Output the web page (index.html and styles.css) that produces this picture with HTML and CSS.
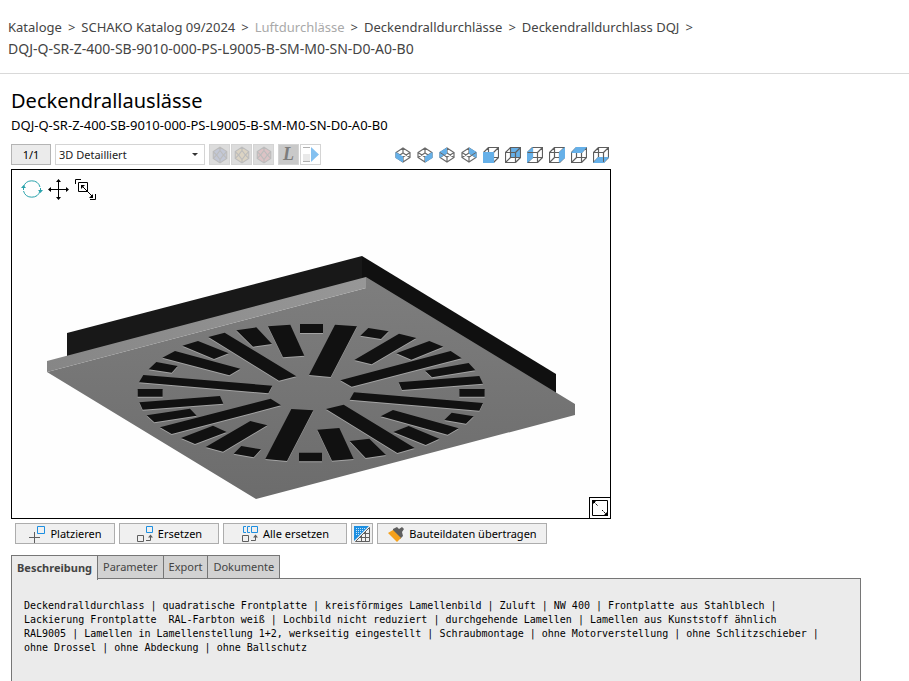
FILE: index.html
```html
<!DOCTYPE html>
<html lang="de">
<head>
<meta charset="utf-8">
<meta name="viewport" content="width=device-width, initial-scale=1">
<title>Deckendrallauslässe</title>
<link rel="stylesheet" href="styles.css">
</head>
<body>
<nav class="crumbs" aria-label="Pfad">
<a href="#">Kataloge</a><span class="sep">&gt;</span><a href="#">SCHAKO Katalog 09/2024</a><span class="sep">&gt;</span><a href="#" class="muted">Luftdurchlässe</a><span class="sep">&gt;</span><a href="#">Deckendralldurchlässe</a><span class="sep">&gt;</span><a href="#">Deckendralldurchlass DQJ</a><span class="sep">&gt;</span><br><a href="#" class="code">DQJ-Q-SR-Z-400-SB-9010-000-PS-L9005-B-SM-M0-SN-D0-A0-B0</a>
</nav>
<main class="page">
<h1 class="title">Deckendrallauslässe</h1>
<p class="subtitle">DQJ-Q-SR-Z-400-SB-9010-000-PS-L9005-B-SM-M0-SN-D0-A0-B0</p>

<svg class="defs" aria-hidden="true">
<defs>
<symbol id="gem" viewBox="0 0 16 16"><path d="M8 1l6 4v6l-6 4-6-4V5z" fill="currentColor"/><path d="M8 1l6 4v6l-6 4-6-4V5zM8 4l3 4-3 4-3-4zM2 5l3 3-3 3M14 5l-3 3 3 3M8 1v3M8 12v3" fill="none" stroke="#bcbcbc"/></symbol>
<symbol id="iso" viewBox="0 0 16 16"><path d="M8 1l7 4.500v5L8 15l-7-4.500v-5zM1 5.500l7 4.500 7-4.500M8 10v5M8 1v5M1 10.500L8 6l7 4.500" fill="none" stroke="#6a6a6a" stroke-width="1.200"/></symbol>
<symbol id="cube" viewBox="0 0 16 16"><path d="M.5 5.500h10v10h-10zM5.500 .5h10v10h-10zM.5 5.500l5-5M10.500 5.500l5-5M10.500 15.500l5-5M.5 15.500l5-5" fill="none" stroke="#5e5e5e" stroke-width="1.200"/></symbol>
</defs>
</svg>

<div class="bar">
<span class="count">1/1</span>
<span class="picker"><select aria-label="Ansicht"><option>3D Detailliert</option></select></span>
<div class="modes">
<button class="mode blue" aria-label="Blau" disabled><svg><use href="#gem"/></svg></button>
<button class="mode sand" aria-label="Gelb" disabled><svg><use href="#gem"/></svg></button>
<button class="mode red" aria-label="Rot" disabled><svg><use href="#gem"/></svg></button>
</div>
<div class="modes">
<button class="mode ell">L</button>
<button class="mode play" aria-label="Weiter"><svg viewBox="0 0 19 19"><path d="M2 2.500h7M2 16.500h7" stroke="#b0b0b0"/><path d="M2 9h7v7H2z" fill="#e9e9e9"/><path d="M10 2l8 7.500-8 7.500z" fill="#83c0f0"/></svg></button>
</div>
<div class="views">
<button aria-label="Isometrie 1"><svg viewBox="0 0 16 16"><use href="#iso"/><path d="M.5 5L8 9.500V15.500L.5 11z" fill="#66b0e8"/></svg></button>
<button aria-label="Isometrie 2"><svg viewBox="0 0 16 16"><use href="#iso"/><path d="M15.500 5L8 9.500v6l7.500-4.500z" fill="#66b0e8"/></svg></button>
<button aria-label="Isometrie 3"><svg viewBox="0 0 16 16"><use href="#iso"/><path d="M.5 5L8 .5v6L.5 11z" fill="#66b0e8"/><path d="M1 5.500l7 4.500" stroke="#6a6a6a"/></svg></button>
<button aria-label="Isometrie 4"><svg viewBox="0 0 16 16"><use href="#iso"/><path d="M15.500 5L8 .5v6l7.500 4.500z" fill="#66b0e8"/><path d="M15 5.500L8 10" stroke="#6a6a6a"/></svg></button>
<button aria-label="Vorne"><svg viewBox="0 0 16 16"><use href="#cube"/><path d="M0 5h11v11H0z" fill="#66b0e8"/></svg></button>
<button aria-label="Hinten"><svg viewBox="0 0 16 16"><path d="M5 0h11v11H5z" fill="#66b0e8"/><use href="#cube"/></svg></button>
<button aria-label="Links"><svg viewBox="0 0 16 16"><use href="#cube"/><path d="M0 5l6-5v11l-6 5z" fill="#66b0e8"/><path d="M.5 5.500h10" stroke="#5e5e5e"/></svg></button>
<button aria-label="Rechts"><svg viewBox="0 0 16 16"><use href="#cube"/><path d="M10 5l6-5v11l-6 5z" fill="#66b0e8"/></svg></button>
<button aria-label="Oben"><svg viewBox="0 0 16 16"><use href="#cube"/><path d="M0 6l5-6h11l-5 6z" fill="#66b0e8"/></svg></button>
<button aria-label="Unten"><svg viewBox="0 0 16 16"><use href="#cube"/><path d="M0 16l5-6h11l-5 6z" fill="#66b0e8"/><path d="M10.500 6v9" stroke="#5e5e5e"/></svg></button>
</div>
</div>

<div class="viewer">
<svg class="model" viewBox="0 0 598 348" role="img" aria-label="Deckendralldurchlass">
<defs>
<linearGradient id="plate" x1="0" y1="0" x2="0" y2="1"><stop offset="0" stop-color="#7e7e7e"/><stop offset="1" stop-color="#6c6c6c"/></linearGradient>
<linearGradient id="rim"><stop offset="0" stop-color="#868686"/><stop offset="1" stop-color="#979797"/></linearGradient>
<g id="slots">
<path d="M265 81L314 68 529 199 477 212zM349 61L409 52 456 102 399 110zM444 49L511 44 553 137 489 142zM187 107L234 93 326 130 282 147zM127 143L165 123 361 176 328 196zM86 178L109 156 173 168 155 188zM57 217L70 195 457 227 445 250zM53 237H128V260H53zM58 277L300 258 310 281 68 299zM80 316L210 296 230 317 103 337zM120 352L452 266 483 286 155 372zM183 384L279 347 320 366 225 402zM257 411L391 333 442 346 309 425zM341 431L364 408 423 418 401 442zM514 297L580 301 501 453 436 447zM540 42H609V69H540zM537 428H606V454H537z"/>
<path transform="translate(540 0)" d="M105 44L171 49 92 201 27 195zM181 77L205 54 266 64 243 87zM163 150L297 71 349 84 215 163zM289 130L388 93 430 110 334 149zM121 211L452 123 485 145 155 230zM375 182L506 159 526 181 396 202zM296 217L538 198 549 221 306 240zM478 237H554V260H478zM162 247L549 279 538 302 149 269zM433 330L455 308 521 319 498 341zM242 319L279 300 476 355 443 374zM280 366L326 348 418 386 377 405zM78 297L131 284 344 414 292 429zM149 393L208 386 258 435 197 444zM52 359L118 354 161 447 96 452z"/>
</g>
</defs>
<path d="M55 163L350 86v30L55 190z" fill="#181818"/>
<path d="M350 86l194 118v20L350 112z" fill="#101010"/>
<path d="M35 202l319-84v-11l209 127v11l-319 84z" fill="url(#plate)"/>
<path d="M35 191l319-84v11L35 202z" fill="url(#rim)"/>
<g transform="translate(108 140) scale(.33333)">
<use href="#slots" y="3" fill="#a4a4a4"/>
<use href="#slots" fill="#111"/>
</g>
</svg>
<div class="tools">
<button aria-label="Drehen"><svg viewBox="0 0 22 22" fill="none" stroke="#2ba3ac"><path d="M2.500 9a8.600 8.600 0 0 1 16.500 0M19 13a8.600 8.600 0 0 1-16.500 0M2.500 9v3M19.500 10v3"/><path d="M0 10h5l-2.500-3zM17 12h5l-2.500 3z" fill="#2ba3ac" stroke="none"/></svg></button>
<button aria-label="Verschieben"><svg viewBox="0 0 22 22"><path d="M10.500 2v18M2 11.500h18" stroke="#000"/><path d="M10.500 1l2.500 3h-5zM10.500 22l2.500-3h-5zM0 11.500L3 9v5zM21 11.500L18 9v5z"/></svg></button>
<button aria-label="Zoomen"><svg viewBox="0 0 22 22" fill="none" stroke="#000"><path d="M.5 6V1.500H6M3.500 4.500h9v9h-9zM7 8l11 11M20.500 16v5.500H15"/><path d="M6 7h4l-4 4zM18 20h-4l4-4z" fill="#000" stroke="none"/></svg></button>
</div>
<button class="expand" aria-label="Vollbild"><svg viewBox="0 0 20 20"><path d="M2.500 2.500h15v15h-15z" fill="none" stroke="#000"/><path d="M4 4l4 4M12 12l4 4" stroke="#000" stroke-dasharray="2 1"/><path d="M2 2h5L2 7zM18 18h-5l5-5z"/></svg></button>
</div>

<div class="actions">
<button class="act"><svg viewBox="0 0 18 18" fill="none"><path d="M6.500 7v11M1 12.500h11" stroke="#5e5e5e"/><path d="M9.500 1.500h7v7h-7z" stroke="#1d8fe1" fill="#f0f0f0"/></svg>Platzieren</button>
<button class="act"><svg viewBox="0 0 18 18" fill="none"><path d="M1.500 10.500h6v6h-6zM10 15.500h4.500V12" stroke="#5e5e5e"/><path d="M12 12.500l2.500-3 2.500 3z" fill="#5e5e5e"/><path d="M10.500 1.500h6v6h-6z" stroke="#1d8fe1"/></svg>Ersetzen</button>
<button class="act wide"><svg viewBox="0 0 18 18" fill="none"><path d="M1.500 10.500h6v6h-6zM10 15.500h4.500V12" stroke="#5e5e5e"/><path d="M12 12.500l2.500-3 2.500 3z" fill="#5e5e5e"/><path d="M10.500 1.500h6v6h-6zM5 1.500H2.500v6H5M9 1.500H6.500v6H9" stroke="#1d8fe1"/></svg>Alle ersetzen</button>
<button class="act square" aria-label="Raster"><svg viewBox="0 0 18 18"><path d="M1 1h15L1 16z" fill="#1d8fe1"/><path d="M3 3.500h9M3 5.500h7M3 7.500h5M3 9.500h3" stroke="#c5e3fa" stroke-dasharray="1 1"/><path d="M16.500 2.500v14H2.500zM12.500 6v10M8.500 10v6M6 12.500h10M10 8.500h6" fill="none" stroke="#5e5e5e"/></svg></button>
<button class="act widest"><svg viewBox="0 0 18 18"><path d="M6 4l4-2 2 2 3-2 2 2-2 3 1 4-3 3-7-7z" fill="#5e5e5e"/><path d="M1 8l5-3 8 8-4 4z" fill="#f6a11b"/></svg>Bauteildaten übertragen</button>
</div>

<div class="tabs" role="tablist">
<button class="tab active" role="tab" aria-selected="true">Beschreibung</button>
<button class="tab" role="tab">Parameter</button>
<button class="tab" role="tab">Export</button>
<button class="tab" role="tab">Dokumente</button>
</div>
<section class="panel">
<pre class="text">Deckendralldurchlass | quadratische Frontplatte | kreisförmiges Lamellenbild | Zuluft | NW 400 | Frontplatte aus Stahlblech |
Lackierung Frontplatte  RAL-Farbton weiß | Lochbild nicht reduziert | durchgehende Lamellen | Lamellen aus Kunststoff ähnlich
RAL9005 | Lamellen in Lamellenstellung 1+2, werkseitig eingestellt | Schraubmontage | ohne Motorverstellung | ohne Schlitzschieber |
ohne Drossel | ohne Abdeckung | ohne Ballschutz</pre>
</section>
</main>
</body>
</html>
```
FILE: styles.css
```css
* { box-sizing: border-box; }
body {
  margin: 0;
  min-height: 100vh;
  display: flex;
  flex-direction: column;
  background: #fff;
  color: #000;
  font: 12px/20px "Noto Sans", sans-serif;
}
button { font: inherit; color: inherit; padding: 0; border: 0; background: none; }
svg { display: block; }
.defs { position: absolute; width: 0; height: 0; }
.crumbs {
  padding: 16px 8px 13px;
  border-bottom: 1px solid #d9d9d9;
  font-size: 13px;
  line-height: 22px;
  color: #444;
}
.crumbs a { color: inherit; text-decoration: none; }
.crumbs .muted { color: #a9a9a9; }
.crumbs .code { font-size: 14px; line-height: 20px; }
.sep { margin: 0 6px; }
.page { flex: 1; display: flex; flex-direction: column; padding: 12px 11px 0; }
.title { margin: 0; font-size: 20px; font-weight: 400; line-height: 30px; }
.subtitle { margin: 0; font-size: 13px; line-height: 18px; }
.bar { display: flex; gap: 4px; width: 100%; max-width: 600px; margin-top: 10px; }
.count {
  width: 40px;
  height: 21px;
  border: 1px solid #b4b4b4;
  background: #ebebeb;
  line-height: 19px;
  text-align: center;
  font-size: 11px;
}
.picker { position: relative; width: 150px; height: 21px; }
.picker::after {
  content: "";
  position: absolute;
  right: 7px;
  top: 9px;
  border: 3px solid transparent;
  border-top-color: #333;
  border-bottom: 0;
}
.picker select {
  width: 100%;
  height: 100%;
  appearance: none;
  border: 1px solid #d4d4d4;
  border-radius: 0;
  background: #fff;
  color: #222;
  padding: 0 3px;
  font: 11px "Noto Sans", sans-serif;
}
.modes { display: flex; gap: 1px; }
.mode { width: 21px; height: 21px; border: 1px solid #d4d4d4; background: #dcdcdc; }
.mode svg { width: 18px; height: 18px; margin: auto; }
.blue { color: #c3c8d6; }
.sand { color: #dbd3c3; }
.red { color: #dcc3c5; }
.ell { background: #c9c9c9; color: #7c7c7c; font: italic bold 18px/19px "Liberation Serif", serif; }
.play { background: #fff; }
.play svg { width: 19px; height: 19px; }
.views { display: flex; gap: 6px; margin-left: auto; padding-right: 2px; }
.views button { display: flex; align-items: center; }
.views svg { width: 16px; height: 16px; }
.viewer { position: relative; max-width: 600px; margin-top: 4px; border: 1px solid #000; background: #fefefe; }
.model { width: 100%; height: auto; }
.tools { position: absolute; left: 9px; top: 8px; display: flex; gap: 5px; }
.tools svg { width: 22px; height: 22px; }
.expand { position: absolute; right: 0; bottom: 0; border: solid #000; border-width: 1px 0 0 1px; }
.expand svg { width: 20px; height: 20px; }
.actions { display: flex; gap: 4px; padding: 4px; }
.act {
  display: flex;
  align-items: center;
  justify-content: center;
  gap: 4px;
  width: 100px;
  height: 21px;
  border: 1px solid #adadad;
  background: #f0f0f0;
  font-size: 11px;
  line-height: 18px;
}
.act svg { width: 18px; height: 18px; }
.wide { width: 124px; }
.square { width: 22px; }
.widest { width: 170px; }
.tabs { display: flex; margin-top: 7px; position: relative; }
.tab {
  height: 24px;
  margin-right: -1px;
  padding: 0 5px;
  border: 1px solid #767676;
  background: #d2d2d2;
  color: #444;
  font-size: 11px;
}
.active { height: 25px; margin-bottom: -1px; border-bottom: 0; background: #ebebeb; font-weight: 700; }
.panel { flex: 1; max-width: 850px; margin-top: -1px; padding: 20px 12px; border: 1px solid #767676; border-bottom: 0; background: #ebebeb; }
.text { margin: 0; font: 10px/14px "DejaVu Sans Mono", monospace; }
```
